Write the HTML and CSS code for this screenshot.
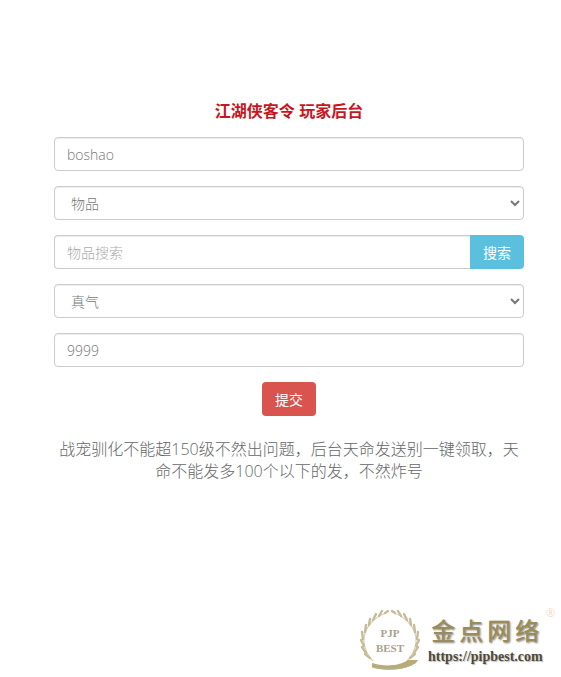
FILE: index.html
```html
<!DOCTYPE html>
<html lang="zh-CN">
<head>
    <meta charset="UTF-8">
    <meta name="viewport" content="width=device-width, initial-scale=1.0">
    <title>江湖侠客令 玩家后台</title>
    <link rel="stylesheet" href="styles.css">
</head>
<body>
<div class="container">
    <h1 class="title">江湖侠客令 玩家后台</h1>
    <form class="panel">
        <input class="field" type="text" value="boshao">
        <select class="field">
            <option>物品</option>
        </select>
        <div class="search">
            <input class="field" type="text" placeholder="物品搜索">
            <button class="btn btn-search" type="button">搜索</button>
        </div>
        <select class="field">
            <option>真气</option>
        </select>
        <input class="field" type="text" value="9999">
        <button class="btn btn-submit" type="submit">提交</button>
    </form>
    <p class="note">战宠驯化不能超150级不然出问题，后台天命发送别一键领取，天命不能发多100个以下的发，不然炸号</p>
</div>
<div class="mark">
    <div class="badge">
        <svg class="wreath" width="64" height="68" viewBox="0 0 64 68" fill="none">
            <path d="M28 9C14 14 5 26 6 38C7 47 10 52 15 57" stroke="#d8d1b8" stroke-width="1.2"/>
            <path d="M36 9C50 14 59 26 58 38C57 47 54 52 49 57" stroke="#d8d1b8" stroke-width="1.2"/>
            <path d="M27 9l3-2M21 12l3-5M15 16l3-6M11 21l1-6M7 28l1-7M5 35l-1-7M6 42l-3-6M8 49l-4-6M12 54l-5-4" stroke="#c6bc98" stroke-width="2.4" stroke-linecap="round"/>
            <path d="M37 9l-3-2M43 12l-3-5M49 16l-3-6M53 21l-1-6M57 28l-1-7M59 35l1-7M58 42l3-6M56 49l4-6M52 54l5-4" stroke="#c6bc98" stroke-width="2.4" stroke-linecap="round"/>
            <path d="M14 59C26 63 42 62 50 56L60 56C58 60 56 60 54 61C42 67 24 67 14 63Z" fill="#b9aa78"/>
            <path d="M14 63C24 66 42 66 54 61" stroke="#a9b98a" stroke-width="1"/>
        </svg>
        <span class="badge-text">PJP<br>BEST</span>
    </div>
    <div class="brand">
        <div class="brand-name">金点网络</div>
        <div class="brand-url">https://pipbest.com</div>
    </div>
    <span class="reg">®</span>
</div>
</body>
</html>
```

FILE: styles.css
```css
body {
    margin: 0;
    background-color: white;
    color: #777;
    font-family: "Open Sans", "Noto Sans CJK SC", sans-serif;
    font-weight: 300;
}
.container {
    width: 470px;
    margin-left: 54px;
    padding-top: 100px;
}
.title {
    margin: 0 0 14px;
    font-size: 16px;
    line-height: 23px;
    font-weight: 700;
    color: #c9151e;
    text-align: center;
    font-family: "Liberation Sans", "Noto Sans CJK SC", sans-serif;
}
.panel {
    display: flex;
    flex-direction: column;
    gap: 15px;
}
.field {
    box-sizing: border-box;
    width: 100%;
    height: 34px;
    padding: 0 12px;
    border: 1px solid #ccc;
    border-radius: 4px;
    background-color: white;
    color: #777;
    font-family: "Open Sans", "Noto Sans CJK SC", sans-serif;
    font-size: 14px;
    font-weight: 300;
    box-shadow: inset 0 1px 1px rgba(0, 0, 0, 0.075);
}
.field::placeholder {
    color: #aaa;
}
.search {
    display: flex;
}
.search .field {
    flex: 1;
    border-radius: 4px 0 0 4px;
    border-right: none;
}
.btn {
    height: 34px;
    padding: 0 12px;
    border: 1px solid transparent;
    border-radius: 4px;
    color: white;
    font-family: "Noto Sans CJK SC", sans-serif;
    font-size: 14px;
    font-weight: 400;
}
.btn-search {
    width: 54px;
    background-color: #5bc0de;
    border-radius: 0 4px 4px 0;
}
.btn-submit {
    align-self: center;
    width: 54px;
    background-color: #d9534f;
}
.note {
    margin: 22px 0 0;
    color: #666;
    font-size: 16px;
    line-height: 22px;
    text-align: center;
}
.mark {
    position: absolute;
    left: 358px;
    top: 604px;
    display: flex;
    align-items: flex-start;
    gap: 6px;
}
.badge {
    position: relative;
    width: 64px;
    height: 68px;
}
.wreath {
    display: block;
    filter: blur(0.6px);
}
.badge-text {
    position: absolute;
    left: 0;
    right: 0;
    top: 22px;
    color: #aaa08a;
    font-family: "Liberation Serif", serif;
    font-size: 11px;
    line-height: 15px;
    font-weight: 700;
    text-align: center;
}
.brand {
    padding-top: 11px;
    text-align: center;
}
.brand-name {
    margin-right: -4px;
    color: #9a8c58;
    font-family: "Noto Sans CJK SC", serif;
    font-size: 24px;
    line-height: 30px;
    font-weight: 500;
    letter-spacing: 4px;
    text-shadow: 1px 1px 2px #888;
}
.brand-url {
    margin-top: 5px;
    color: #4d4a3c;
    font-family: "Liberation Serif", serif;
    font-size: 14px;
    line-height: 14px;
    font-weight: 700;
    text-shadow: 1px 1px 1px #bbb;
}
.reg {
    position: absolute;
    left: 188px;
    top: 1px;
    color: #eccdb2;
    font-size: 11px;
}
```
